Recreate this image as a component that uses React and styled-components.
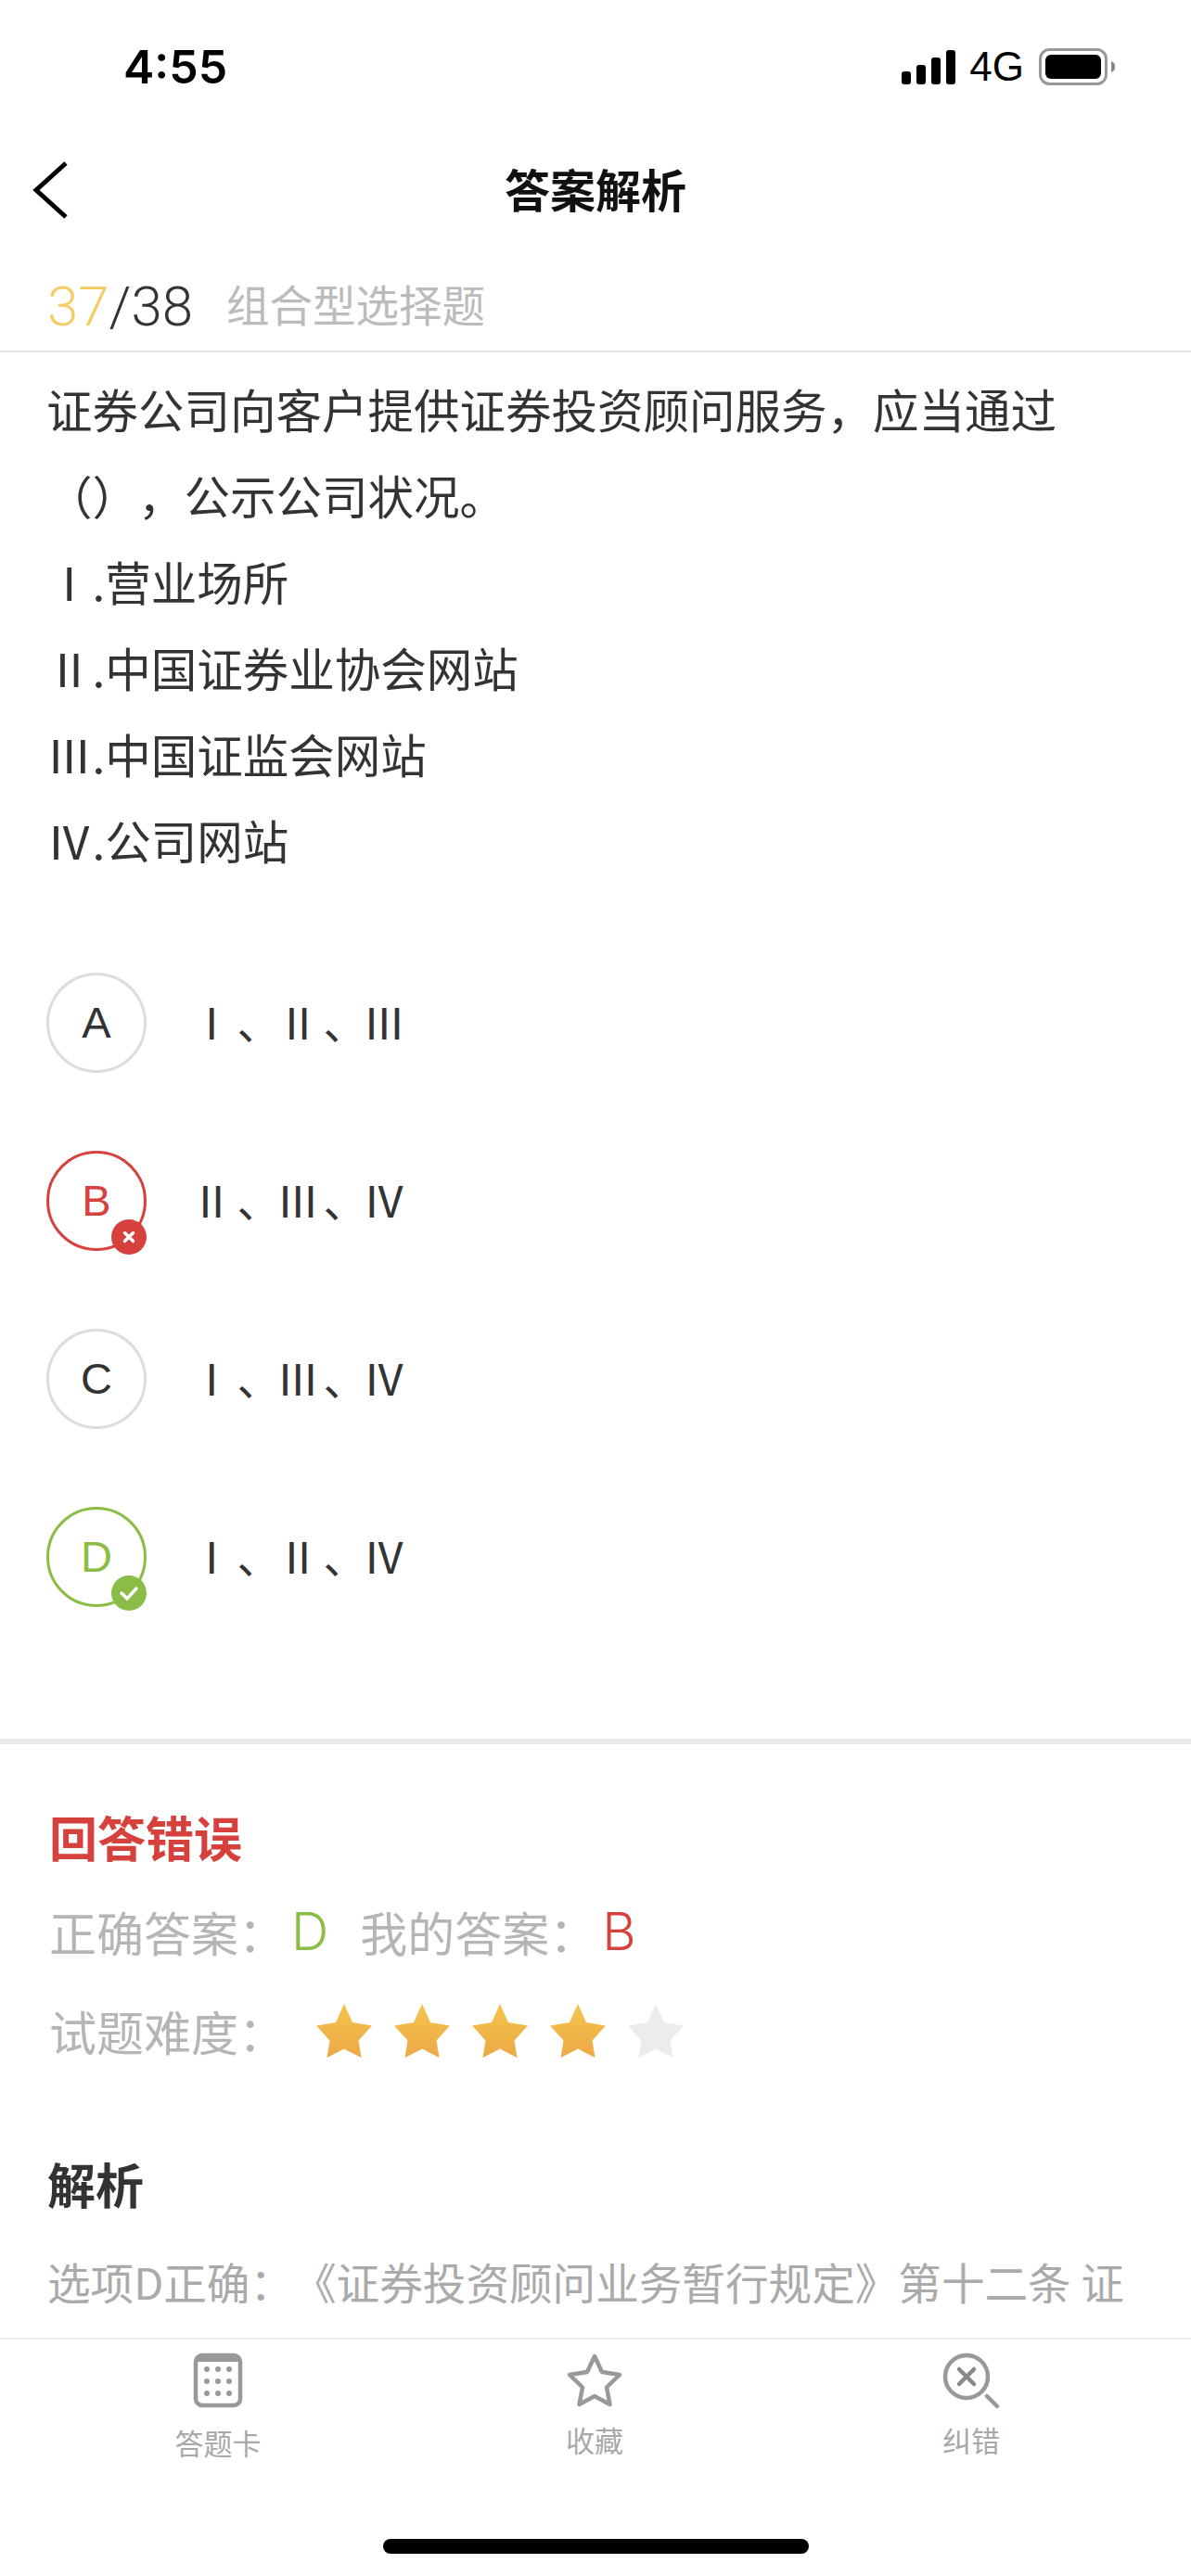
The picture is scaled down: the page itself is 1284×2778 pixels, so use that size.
import React from "react";
import styled, { createGlobalStyle } from "styled-components";

const CJK = `"Noto Sans CJK SC", "Noto Sans", sans-serif`;
const LATIN = `"Liberation Sans", "Noto Sans CJK SC", sans-serif`;

const RED = "#d6413d";
const GREEN = "#8bbd46";

const GlobalStyle = createGlobalStyle`
  html, body {
    margin: 0;
    padding: 0;
    background: #fff;
  }
  * {
    box-sizing: border-box;
    text-spacing-trim: space-all;
  }
`;

const Screen = styled.div`
  width: 1284px;
  height: 2778px;
  display: flex;
  flex-direction: column;
  overflow: hidden;
  background: #fff;
  font-family: ${CJK};
  color: #333;
`;

// status bar
const StatusBar = styled.div`
  height: 144px;
  flex: none;
  display: flex;
  align-items: center;
  justify-content: space-between;
  padding: 0 80px 0 133px;
`;
const Time = styled.div`
  font-family: Inter, sans-serif;
  font-weight: 600;
  font-size: 50px;
  color: #000;
`;
const StatusIcons = styled.div`
  display: flex;
  align-items: center;
  gap: 16px;
`;
const Network = styled.span`
  margin-left: -2px;
  font-family: ${LATIN};
  font-size: 44px;
  color: #000;
`;

// nav
const NavBar = styled.div`
  position: relative;
  height: 122px;
  flex: none;
  display: flex;
  align-items: center;
  justify-content: center;
`;
const BackIcon = styled.svg`
  position: absolute;
  left: 34px;
  top: 29px;
`;
const Title = styled.h1`
  margin: 0 0 6px;
  font-size: 49px;
  font-weight: 700;
  color: #111;
`;

// question
const Counter = styled.div`
  height: 114px;
  flex: none;
  display: flex;
  align-items: center;
  padding: 17px 0 0 51px;
  border-bottom: 2px solid #e3e3e3;
`;
const Current = styled.span`
  font-family: Roboto, sans-serif;
  font-weight: 300;
  font-size: 60px;
  color: #f5cd66;
`;
const Total = styled.span`
  font-family: Roboto, sans-serif;
  font-weight: 300;
  font-size: 60px;
  color: #333;
`;
const QuestionType = styled.span`
  margin: 0 0 8px 36px;
  font-size: 46.5px;
  color: #bbb;
`;
const Content = styled.div`
  flex: 1;
  min-height: 0;
  overflow: hidden;
`;
const Question = styled.div`
  padding: 14px 50px 0 50px;
  font-size: 49.5px;
  line-height: 93px;
  color: #333;
`;
const Line = styled.div`
  white-space: nowrap;
`;
const Options = styled.div`
  display: flex;
  flex-direction: column;
  gap: 84px;
  padding: 97px 0 142px 50px;
  border-bottom: 6px solid #e8e8e8;
`;
const OptionRow = styled.div`
  display: flex;
  align-items: center;
  height: 108px;
`;
const OptionCircle = styled.div`
  position: relative;
  width: 108px;
  height: 108px;
  flex: none;
  display: flex;
  align-items: center;
  justify-content: center;
  padding-bottom: 2px;
  border-radius: 50%;
  border: 3px solid ${({ $color }) => $color || "#dcdcdc"};
  color: ${({ $color }) => $color || "#333"};
  font-family: ${LATIN};
  font-size: 47px;
`;
const Badge = styled.div`
  position: absolute;
  right: -3px;
  bottom: -7px;
  width: 38px;
  height: 38px;
  border-radius: 50%;
  display: flex;
  align-items: center;
  justify-content: center;
  background: ${({ $color }) => $color};
`;
const OptionText = styled.div`
  margin: 0 0 5px 47px;
  font-size: 46.5px;
  color: #333;
  white-space: nowrap;
`;
const Separator = styled.span`
  margin: 0 -4px 0 4px;
`;

// result
const Result = styled.div`
  padding: 0 50px 0 53px;
`;
const ResultTitle = styled.h2`
  margin: 0;
  padding-top: 62px;
  font-size: 52px;
  line-height: 76px;
  font-weight: 700;
  color: ${RED};
`;
const AnswerRow = styled.div`
  display: flex;
  align-items: center;
  height: 92px;
  margin-top: 18px;
  font-size: 51px;
  color: #b5b5b5;
`;
const Answer = styled.span`
  font-family: Inter, sans-serif;
  font-weight: 300;
  font-size: 56px;
  margin: 0 34px 0 6px;
  color: ${({ $color }) => $color};
`;
const DifficultyRow = styled.div`
  display: flex;
  align-items: center;
  height: 92px;
  margin-top: 15px;
  font-size: 51px;
  color: #b5b5b5;
`;
const Stars = styled.div`
  display: flex;
  gap: 24px;
  margin-left: 33px;
`;
const Analysis = styled.div`
  padding: 81px 40px 0 51px;
`;
const AnalysisTitle = styled.h3`
  margin: 0;
  font-size: 52px;
  line-height: 76px;
  font-weight: 700;
  color: #333;
`;
const AnalysisText = styled.div`
  margin-top: 29px;
  font-size: 46.6px;
  line-height: 76px;
  color: #aaa;
  white-space: nowrap;
`;

// bottom tabs
const TabBar = styled.div`
  flex: none;
  height: 257px;
  display: grid;
  grid-template-columns: repeat(3, 406px);
  padding: 14px 0 0 32px;
  border-top: 2px solid #eee;
  position: relative;
`;
const Tab = styled.div`
  display: flex;
  flex-direction: column;
  align-items: center;
  gap: ${({ $gap }) => $gap || 12}px;
`;
const TabLabel = styled.span`
  font-size: 31px;
  line-height: 44px;
  color: #a8a8a8;
`;
const HomeIndicator = styled.div`
  position: absolute;
  left: 413px;
  bottom: 24px;
  width: 459px;
  height: 16px;
  border-radius: 8px;
  background: #000;
`;

const StarIcon = ({ filled, id }) => (
  <svg width="60" height="58" viewBox="0 0 60 58">
    {filled && (
      <defs>
        <linearGradient id={id} x1="0" y1="0" x2="0" y2="1">
          <stop offset="0" stopColor="#f4c54c" />
          <stop offset="1" stopColor="#eca845" />
        </linearGradient>
      </defs>
    )}
    <path
      d="M30 0 L39 20 L60 23.5 L45.5 39.5 L48.5 58 L30 48.5 L11.5 58 L14.5 39.5 L0 23.5 L21 20 Z"
      fill={filled ? `url(#${id})` : "#ececec"}
    />
  </svg>
);

const options = [
  { key: "A", items: ["Ⅰ", "Ⅱ", "Ⅲ"] },
  { key: "B", items: ["Ⅱ", "Ⅲ", "Ⅳ"], color: RED, badge: "wrong" },
  { key: "C", items: ["Ⅰ", "Ⅲ", "Ⅳ"] },
  { key: "D", items: ["Ⅰ", "Ⅱ", "Ⅳ"], color: GREEN, badge: "right" },
];

const lines = [
  "证券公司向客户提供证券投资顾问服务，应当通过",
  "（），公示公司状况。",
  "Ⅰ.营业场所",
  "Ⅱ.中国证券业协会网站",
  "Ⅲ.中国证监会网站",
  "Ⅳ.公司网站",
];

export default function App() {
  return (
    <Screen>
      <GlobalStyle />
      <StatusBar>
        <Time>4:55</Time>
        <StatusIcons>
          <svg width="60" height="38" viewBox="0 0 60 38">
            <rect x="1" y="24" width="10" height="14" rx="3" fill="#000" />
            <rect x="17" y="17" width="10" height="21" rx="3" fill="#000" />
            <rect x="33" y="9" width="10" height="29" rx="3" fill="#000" />
            <rect x="49" y="1" width="10" height="37" rx="3" fill="#000" />
          </svg>
          <Network>4G</Network>
          <svg width="84" height="40" viewBox="0 0 84 40">
            <rect x="1.5" y="1.5" width="71" height="37" rx="10" fill="none" stroke="#999" strokeWidth="3" />
            <rect x="7" y="7" width="60" height="26" rx="6" fill="#000" />
            <path d="M78 14 C81 15 82 17 82 20 C82 23 81 25 78 26 Z" fill="#888" />
          </svg>
        </StatusIcons>
      </StatusBar>

      <NavBar>
        <BackIcon width="42" height="64" viewBox="0 0 42 64">
          <path d="M37 3 L5 32 L37 61" fill="none" stroke="#000" strokeWidth="5" />
        </BackIcon>
        <Title>答案解析</Title>
      </NavBar>

      <Counter>
        <Current>37</Current>
        <Total>/38</Total>
        <QuestionType>组合型选择题</QuestionType>
      </Counter>

      <Content>
        <Question>
          {lines.map((line) => (
            <Line key={line}>{line}</Line>
          ))}
        </Question>

        <Options>
          {options.map((option) => (
            <OptionRow key={option.key}>
              <OptionCircle $color={option.color}>
                {option.key}
                {option.badge && (
                  <Badge $color={option.color}>
                    <svg width="22" height="22" viewBox="0 0 22 22">
                      {option.badge === "wrong" ? (
                        <path d="M6.5 6.5 L15.5 15.5 M15.5 6.5 L6.5 15.5" stroke="#fff" strokeWidth="3.5" strokeLinecap="round" />
                      ) : (
                        <path d="M3 11 L9 17 L19 6" fill="none" stroke="#fff" strokeWidth="3.5" strokeLinecap="round" />
                      )}
                    </svg>
                  </Badge>
                )}
              </OptionCircle>
              <OptionText>
                {option.items[0]}
                <Separator>、</Separator>
                {option.items[1]}
                <Separator>、</Separator>
                {option.items[2]}
              </OptionText>
            </OptionRow>
          ))}
        </Options>

        <Result>
          <ResultTitle>回答错误</ResultTitle>
          <AnswerRow>
            正确答案：<Answer $color={GREEN}>D</Answer>我的答案：<Answer $color={RED}>B</Answer>
          </AnswerRow>
          <DifficultyRow>
            试题难度：
            <Stars>
              {[1, 2, 3, 4, 5].map((n) => (
                <StarIcon key={n} id={`star-${n}`} filled={n < 5} />
              ))}
            </Stars>
          </DifficultyRow>
        </Result>

        <Analysis>
          <AnalysisTitle>解析</AnalysisTitle>
          <AnalysisText>选项D正确：《证券投资顾问业务暂行规定》第十二条 证</AnalysisText>
        </Analysis>
      </Content>

      <TabBar>
        <Tab $gap={15}>
          <svg width="54" height="60" viewBox="0 0 54 60">
            <rect x="3" y="3" width="48" height="54" rx="7" fill="none" stroke="#999" strokeWidth="4.5" />
            <path d="M3 10 C3 5 6 3 10 3 L44 3 C48 3 51 5 51 10 Z" fill="#999" />
            {[18, 31, 44].map((y) =>
              [15, 27, 39].map((x) => <circle key={`${x}-${y}`} cx={x} cy={y} r="3" fill="#999" />)
            )}
          </svg>
          <TabLabel>答题卡</TabLabel>
        </Tab>
        <Tab>
          <svg width="62" height="60" viewBox="0 0 62 60">
            <path
              d="M31 4 L39 21 L58 24 L44 37.5 L47.5 56 L31 47 L14.5 56 L18 37.5 L4 24 L23 21 Z"
              fill="none"
              stroke="#999"
              strokeWidth="4.5"
              strokeLinejoin="round"
            />
          </svg>
          <TabLabel>收藏</TabLabel>
        </Tab>
        <Tab>
          <svg width="62" height="60" viewBox="0 0 62 60">
            <circle cx="26" cy="26" r="23" fill="none" stroke="#999" strokeWidth="4.5" />
            <path d="M18 18 L34 34 M34 18 L18 34" stroke="#888" strokeWidth="4.5" strokeLinecap="round" />
            <path d="M48 47 L59 58" stroke="#999" strokeWidth="4.5" strokeLinecap="round" />
          </svg>
          <TabLabel>纠错</TabLabel>
        </Tab>
        <HomeIndicator />
      </TabBar>
    </Screen>
  );
}
